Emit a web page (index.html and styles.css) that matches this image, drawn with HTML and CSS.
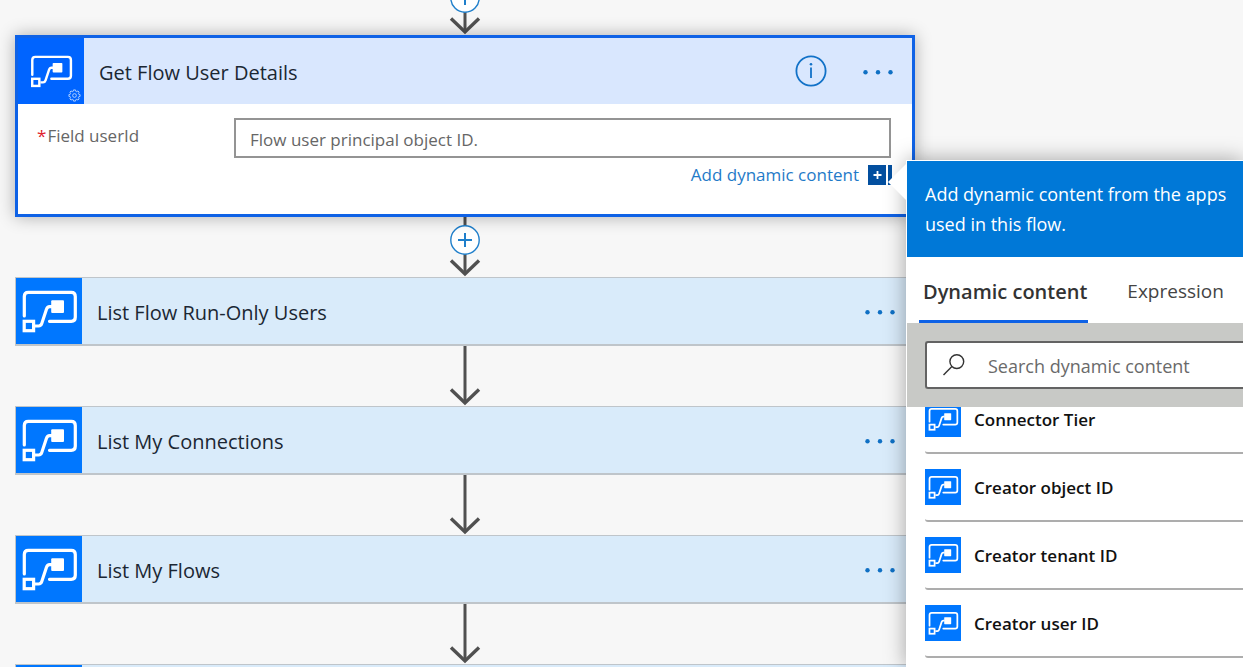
FILE: index.html
```html
<!DOCTYPE html>
<html lang="en">
<head>
<meta charset="utf-8">
<meta name="viewport" content="width=device-width, initial-scale=1">
<title>Flow designer</title>
<link rel="stylesheet" href="styles.css">
</head>
<body>
<svg class="defs" aria-hidden="true">
  <symbol id="flow" viewBox="0 0 66 66">
    <g fill="none" stroke="#fff" stroke-width="3.2">
      <path d="M8.3 38V18.4Q8.3 14.4 12.3 14.4H55.3Q59.3 14.4 59.3 18.4V39.3Q59.3 43.3 55.3 43.3H33.5" stroke-linecap="round"/>
      <rect x="8.2" y="43.3" width="9.4" height="9.4"/>
      <path d="M19 48H22.6Q25 48 25.8 45.4L30.4 31.4Q31.3 28.6 33.6 28.6H36"/>
    </g>
    <rect x="35.2" y="22.3" width="12.8" height="12.8" rx="1" fill="#fff"/>
  </symbol>
  <symbol id="arrow" viewBox="0 0 32 60">
    <path d="M16 0V57" fill="none" stroke="#505050" stroke-width="3"/>
    <path d="M2 43.5L16 57L30 43.5" fill="none" stroke="#505050" stroke-width="3.4"/>
  </symbol>
  <symbol id="plus" viewBox="0 0 30 30">
    <circle cx="15" cy="15" r="14.2" fill="#fff" stroke="#1f7fcb" stroke-width="1.4"/>
    <path d="M15 8V22M8 15H22" stroke="#1f7fcb" stroke-width="2"/>
  </symbol>
  <symbol id="dots" viewBox="0 0 32 8">
    <g fill="#0f70c4"><circle cx="3.5" cy="5.3" r="2.2"/><circle cx="16" cy="5.3" r="2.2"/><circle cx="28.5" cy="5.3" r="2.2"/></g>
  </symbol>
</svg>

<main class="canvas">
  <div class="connector connector-first">
    <svg class="arrow"><use href="#arrow"/></svg>
    <button class="insert" aria-label="Insert a new step"><svg><use href="#plus"/></svg></button>
  </div>

  <section class="card card-open">
    <header class="card-head">
      <span class="tile"><svg class="logo-md"><use href="#flow"/></svg>
        <svg class="gear" viewBox="0 0 14 14" fill="none" stroke="#b9d6ff" stroke-width="1"><path d="M5.9 1H8.1L8.4 2.5L9.4 2.9L10.7 2.1L12 3.4L11.2 4.7L11.6 5.7L13 6V8L11.6 8.3L11.2 9.3L12 10.6L10.7 11.9L9.4 11.1L8.4 11.5L8.1 13H5.9L5.6 11.5L4.6 11.1L3.3 11.9L2 10.6L2.8 9.3L2.4 8.3L1 8V6L2.4 5.7L2.8 4.7L2 3.4L3.3 2.1L4.6 2.9L5.6 2.5Z"/><circle cx="7" cy="7" r="2"/></svg>
      </span>
      <h2 class="card-title">Get Flow User Details</h2>
      <button class="icon-btn info" aria-label="Information"><svg viewBox="0 0 32 32"><circle cx="16" cy="16" r="14.6" fill="none" stroke="#1272c8" stroke-width="1.8"/><path d="M16 12.5V23" stroke="#1272c8" stroke-width="1.8"/><circle cx="16" cy="9.2" r="1.3" fill="#1272c8"/></svg></button>
      <button class="icon-btn more" aria-label="More options"><svg><use href="#dots"/></svg></button>
    </header>
    <div class="card-body">
      <label class="field-label" for="userid"><span class="required">*</span>Field userId</label>
      <div class="field">
        <input class="field-input" id="userid" type="text" placeholder="Flow user principal object ID.">
        <button class="add-dynamic">Add dynamic content
          <svg viewBox="0 0 24 20"><path d="M0 0H18V20H0ZM20 0H24V20H20Z" fill="#034f9f"/><path d="M9.5 6V14M5.5 10H13.5" stroke="#fff" stroke-width="1.8"/></svg>
        </button>
      </div>
    </div>
  </section>

  <div class="connector">
    <svg class="arrow"><use href="#arrow"/></svg>
    <button class="insert" aria-label="Insert a new step"><svg><use href="#plus"/></svg></button>
  </div>

  <section class="card">
    <header class="card-head">
      <span class="tile"><svg class="logo-lg"><use href="#flow"/></svg></span>
      <h2 class="card-title">List Flow Run-Only Users</h2>
      <button class="icon-btn more" aria-label="More options"><svg><use href="#dots"/></svg></button>
    </header>
  </section>
  <div class="connector"><svg class="arrow"><use href="#arrow"/></svg></div>
  <section class="card">
    <header class="card-head">
      <span class="tile"><svg class="logo-lg"><use href="#flow"/></svg></span>
      <h2 class="card-title">List My Connections</h2>
      <button class="icon-btn more" aria-label="More options"><svg><use href="#dots"/></svg></button>
    </header>
  </section>
  <div class="connector"><svg class="arrow"><use href="#arrow"/></svg></div>
  <section class="card">
    <header class="card-head">
      <span class="tile"><svg class="logo-lg"><use href="#flow"/></svg></span>
      <h2 class="card-title">List My Flows</h2>
      <button class="icon-btn more" aria-label="More options"><svg><use href="#dots"/></svg></button>
    </header>
  </section>
  <div class="connector"><svg class="arrow"><use href="#arrow"/></svg></div>
  <section class="card">
    <header class="card-head"><span class="tile"></span></header>
  </section>
</main>

<aside class="panel">
  <svg class="beak" viewBox="0 0 19 38"><path d="M19 0V38L0 19Z" fill="#fff"/></svg>
  <p class="panel-intro">Add dynamic content from the apps used in this flow.</p>
  <div class="tabs" role="tablist">
    <button class="tab tab-active" role="tab" aria-selected="true">Dynamic content</button>
    <button class="tab" role="tab" aria-selected="false">Expression</button>
  </div>
  <div class="search">
    <label class="search-box">
      <svg viewBox="0 0 24 24" fill="none" stroke="#333" stroke-width="1.4"><circle cx="14.8" cy="8.6" r="6.9"/><path d="M9.9 13.5L1.5 21.9"/></svg>
      <input class="search-input" type="text" placeholder="Search dynamic content" aria-label="Search dynamic content">
    </label>
  </div>
  <div class="results">
    <ul class="result-list">
      <li class="result"><span class="mini"><svg><use href="#flow"/></svg></span>Connector Tier</li>
      <li class="result"><span class="mini"><svg><use href="#flow"/></svg></span>Creator object ID</li>
      <li class="result"><span class="mini"><svg><use href="#flow"/></svg></span>Creator tenant ID</li>
      <li class="result"><span class="mini"><svg><use href="#flow"/></svg></span>Creator user ID</li>
    </ul>
  </div>
</aside>
</body>
</html>
```
FILE: styles.css
```css
* { box-sizing: border-box; }

body {
  position: relative;
  height: 100vh;
  margin: 0;
  overflow: hidden;
  background: #f7f7f7;
  color: #1b2733;
  font-family: "Open Sans", "Noto Sans", sans-serif;
  font-size: 17px;
}

button {
  padding: 0;
  border: 0;
  background: none;
  font: inherit;
  cursor: pointer;
}

svg { display: block; }

.defs { position: absolute; width: 0; height: 0; }

.canvas {
  height: 100%;
  padding-left: 15px;
  overflow: hidden;
}

.canvas > * { max-width: 900px; }

.connector {
  display: grid;
  justify-items: center;
}

.connector > * { grid-area: 1 / 1; }
.connector-first { margin-top: -25px; }

.arrow { width: 32px; height: 60px; }

.insert { align-self: start; margin-top: 8px; }
.insert svg { width: 30px; height: 30px; }

.card {
  border: 1px solid #bfc5ca;
  border-bottom-width: 2px;
  background: #d9ebfa;
}

.card-open {
  position: relative;
  border: 3px solid #0f62e6;
  background: #fff;
  box-shadow: 0 0 16px rgba(0, 0, 0, 0.3);
}

.card-head {
  display: flex;
  align-items: center;
  padding-right: 18px;
}

.card-open .card-head { background: #d9e7fe; }

.tile {
  position: relative;
  display: grid;
  place-items: center;
  width: 66px;
  height: 66px;
  background: #0077ff;
}

.card-open .tile { background: #0064ff; }

.logo-lg { width: 66px; height: 66px; }
.logo-md { width: 50px; height: 50px; }

.gear {
  position: absolute;
  right: 3px;
  bottom: 2px;
  width: 13px;
  height: 13px;
}

.card-title {
  flex: 1;
  margin: 0 0 0 15px;
  padding-top: 2px;
  font-size: 20px;
  font-weight: 400;
}

.info svg { width: 32px; height: 32px; }
.more { margin-left: 35px; }
.more svg { width: 32px; height: 8px; }

.card-body {
  display: grid;
  grid-template-columns: 197px 1fr;
  padding: 14px 21px 26px 19px;
}

.field-label {
  padding-top: 6px;
  color: #666;
  line-height: 24px;
}

.required { margin-right: 1px; color: #e0202c; }

.field-input {
  display: block;
  width: 100%;
  height: 40px;
  padding: 2px 14px 0;
  border: 2px solid #949494;
  background: #fff;
  font: inherit;
}

.field-input::placeholder { color: #666; opacity: 1; }

.add-dynamic {
  display: flex;
  align-items: center;
  gap: 9px;
  margin: 5px -1px 0 auto;
  padding-bottom: 1px;
  color: #1f7ac8;
  line-height: 24px;
}

.add-dynamic svg { width: 24px; height: 20px; }

.panel {
  position: absolute;
  top: 160px;
  right: 0;
  bottom: 0;
  left: 906px;
  display: flex;
  flex-direction: column;
  border: 1px solid #fff;
  border-width: 1px 0 0 1px;
  background: #fff;
  box-shadow: 0 0 20px rgba(0, 0, 0, 0.35);
}

.beak {
  position: absolute;
  top: 2px;
  left: -19px;
  width: 19px;
  height: 38px;
}

.panel-intro {
  margin: 0;
  padding: 18px 0 18px 18px;
  background: #0078d7;
  color: #fff;
  font-size: 18px;
  line-height: 30px;
}

.tabs {
  display: flex;
  gap: 35px;
  padding-left: 12px;
}

.tab {
  height: 66px;
  padding: 5px 1px 0 4px;
  border-bottom: 3px solid transparent;
  color: #444;
  font-size: 19px;
}

.tab-active {
  border-color: #0f62e6;
  color: #333;
  font-size: 20px;
  font-weight: 600;
}

.search {
  padding: 18px 0 18px 18px;
  background: #c8c9c6;
}

.search-box {
  display: flex;
  align-items: center;
  gap: 22px;
  height: 48px;
  padding-left: 15px;
  border: 2px solid #636363;
  border-right: 0;
  border-radius: 3px 0 0 3px;
  background: #fff;
}

.search-box svg { flex: none; width: 24px; height: 24px; }

.search-input {
  flex: 1;
  min-width: 0;
  padding: 2px 0 0;
  border: 0;
  background: none;
  font: inherit;
  font-size: 18px;
}

.search-input::placeholder { color: #6a6a6a; opacity: 1; }

.results {
  flex: 1;
  min-height: 0;
  overflow: hidden;
}

.result-list {
  margin: -21px 0 0;
  padding: 0 0 0 18px;
  list-style: none;
}

.result {
  display: flex;
  align-items: center;
  gap: 13px;
  height: 68px;
  border-bottom: 2px solid #adadad;
  border-radius: 0 0 0 3px;
  color: #111;
  font-size: 17px;
  font-weight: 600;
}

.mini { background: #0077ff; }
.mini svg { width: 36px; height: 36px; }
```
